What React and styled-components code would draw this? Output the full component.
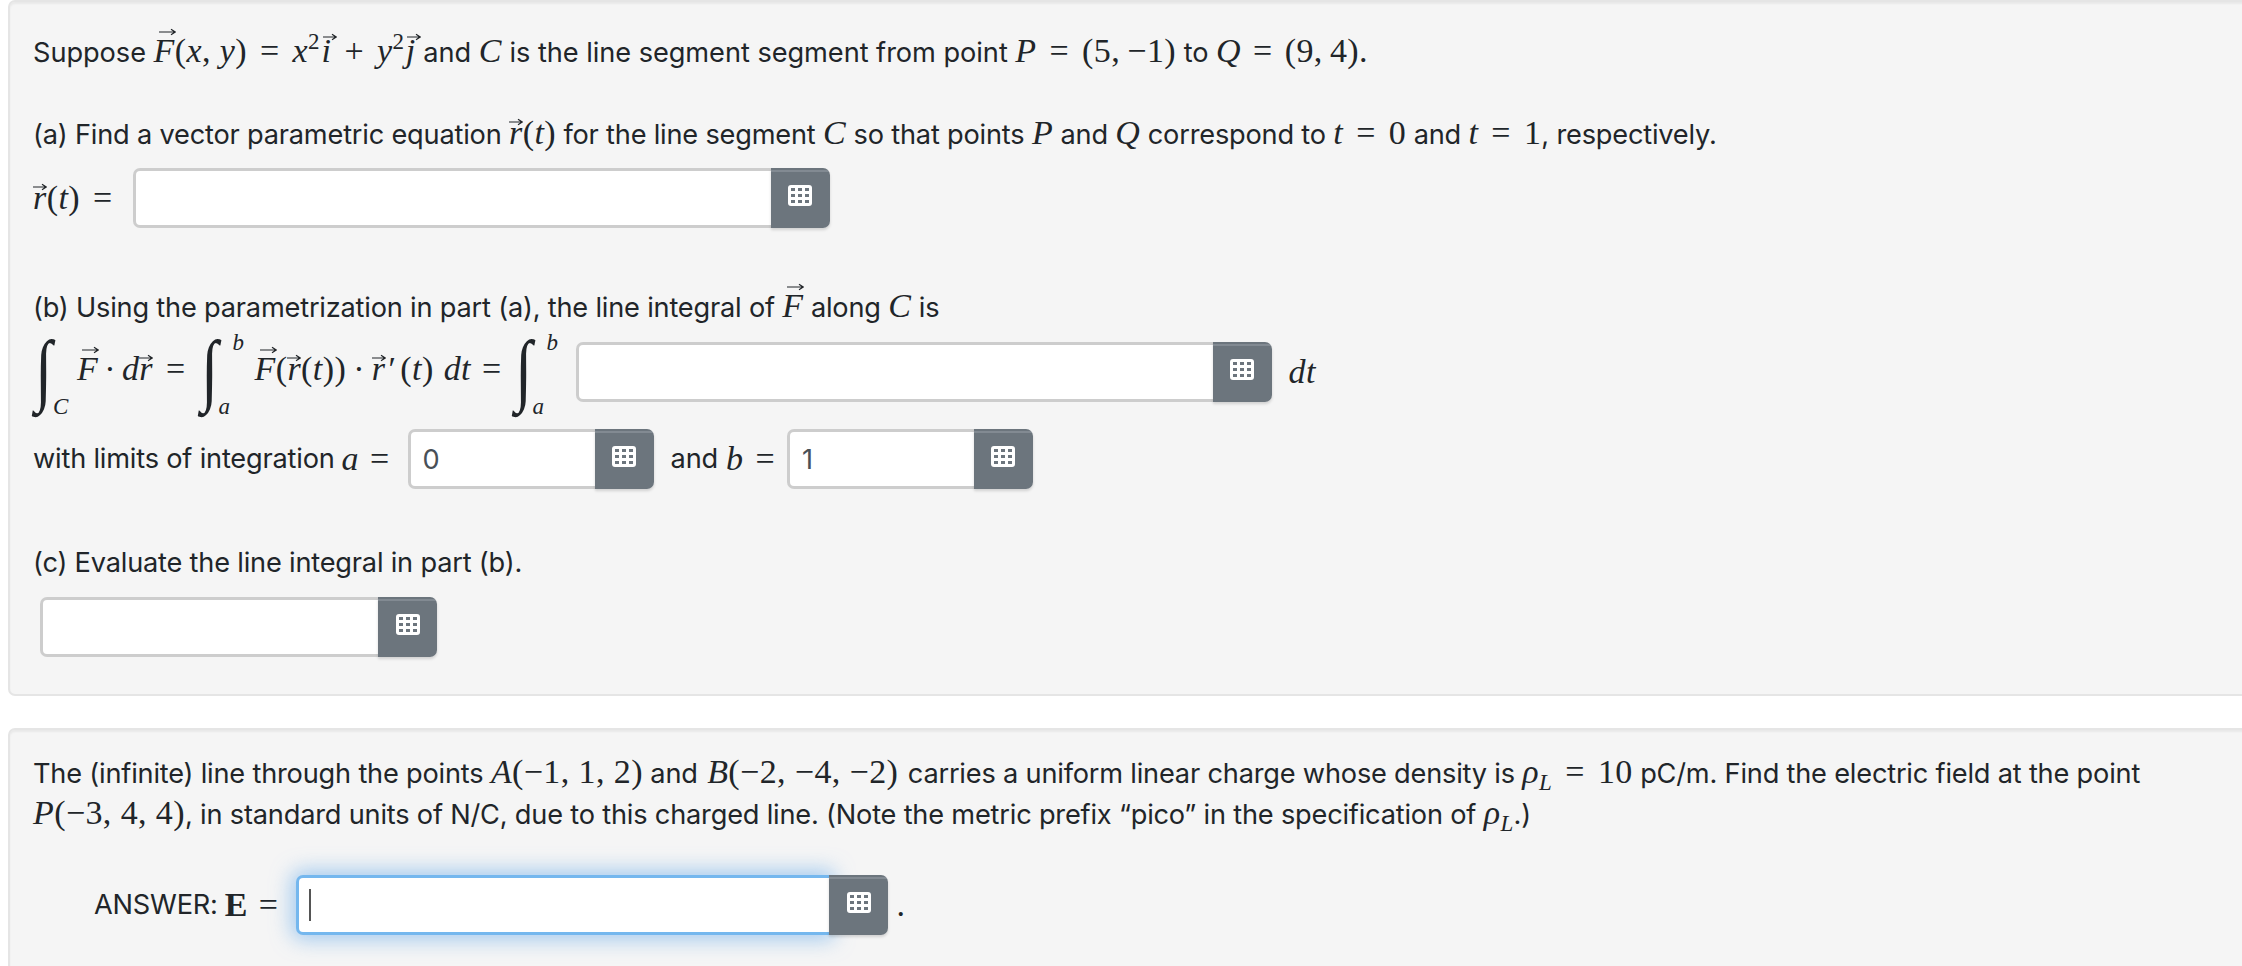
import React from "react";
import styled, { createGlobalStyle } from "styled-components";

const GlobalStyle = createGlobalStyle`
  html, body {
    margin: 0;
    height: 100%;
    overflow: hidden;
    background: #fff;
  }
  body {
    font-family: Inter, "Liberation Sans", sans-serif;
    font-size: 27.2px;
    line-height: 40.8px;
    color: #212529;
  }
`;

const Page = styled.div`
  height: 966px;
  overflow: hidden;
  padding-left: 8px;
  display: flex;
  flex-direction: column;
  gap: 32px;
  letter-spacing: -0.2px;
`;

const Panel = styled.section`
  flex: none;
  width: 2260px;
  box-sizing: border-box;
  height: ${(p) => p.$height}px;
  padding: ${(p) => p.$top}px 24px 0 23px;
  background: #f5f5f5;
  border: 2px solid #e5e5e5;
  border-radius: 7px;
  box-shadow: inset 0 2px 2px rgba(0, 0, 0, 0.05);
`;

const Line = styled.div`
  white-space: nowrap;
  height: 41px;
  margin-top: ${(p) => p.$mt || 0}px;
  letter-spacing: ${(p) => (p.$ls === undefined ? -0.2 : p.$ls)}px;
`;

const Row = styled.div`
  display: flex;
  align-items: center;
  height: ${(p) => p.$h || 60}px;
  margin-top: ${(p) => p.$mt || 0}px;
  margin-left: ${(p) => p.$ml || 0}px;
  white-space: nowrap;
`;

const Word = styled.span`
  margin-left: ${(p) => p.$ml || 0}px;
`;

const Math = styled.span`
  font-family: "Liberation Serif", serif;
  font-size: 34px;
  line-height: 1;
  letter-spacing: 0.4px;
  margin: 0 ${(p) => p.$gap || 0}px;
`;

const Mi = styled.i`
  font-style: italic;
  margin-left: ${(p) => p.$ml || 0}px;
  margin-right: ${(p) => p.$mr || 0}px;
`;

const Bold = styled.b`
  font-weight: 700;
`;

const Op = styled.span`
  margin: 0 ${(p) => (p.$gap === undefined ? 13 : p.$gap)}px;
`;

const Sup = styled.sup`
  font-size: 23px;
  line-height: 0;
  vertical-align: 13px;
  margin-right: 1.5px;
`;

const Sub = styled.sub`
  font-size: 23px;
  line-height: 0;
  vertical-align: -7px;
  font-style: italic;
`;

const Prime = styled.span`
  margin: 0 4px 0 3px;
`;

const VecBox = styled.span`
  position: relative;
  display: inline-block;
`;

const ArrowSvg = styled.svg`
  position: absolute;
  left: ${(p) => p.$left}px;
  top: ${(p) => p.$top}px;
`;

const IntegralBox = styled.span`
  position: relative;
  display: inline-block;
  vertical-align: middle;
  width: ${(p) => p.$w}px;
  height: 58px;
`;

const IntegralSign = styled.span`
  position: absolute;
  left: 2px;
  top: -20px;
  font-family: "Liberation Serif", serif;
  font-size: 80px;
  line-height: 92px;
  font-weight: 400;
  transform-origin: left center;
  transform: scaleX(0.78);
`;

const Limit = styled.i`
  position: absolute;
  left: ${(p) => p.$left}px;
  top: ${(p) => p.$top}px;
  font-family: "Liberation Serif", serif;
  font-size: 23px;
  line-height: 1;
`;

const Group = styled.span`
  position: relative;
  display: inline-flex;
  flex: none;
  height: 60px;
  margin: ${(p) => p.$margin || "0"};
`;

const Field = styled.input`
  box-sizing: border-box;
  width: ${(p) => p.$w}px;
  height: 60px;
  padding: 0 12px;
  background: #fff;
  color: #495057;
  border: 3px solid ${(p) => (p.$focused ? "#74b7ee" : "#cdcdcd")};
  border-right: none;
  border-radius: 7px 0 0 7px;
  font-family: Inter, "Liberation Sans", sans-serif;
  font-size: 27.2px;
  outline: none;
  box-shadow: ${(p) => (p.$focused ? "0 0 20px 5px rgba(100, 170, 235, 0.55)" : "none")};
`;

const CalcButton = styled.button`
  width: 59px;
  height: 60px;
  padding: 0 0 6px;
  display: flex;
  align-items: center;
  justify-content: center;
  border: none;
  border-radius: 0 7px 7px 0;
  background: linear-gradient(#6c757d 0 2px, #828a92 2px 4px, #6c757d 4px);
  box-shadow: 0 2px 3px rgba(0, 0, 0, 0.15);
  position: relative;
`;

const Caret = styled.span`
  position: absolute;
  left: 13px;
  top: 14px;
  width: 2px;
  height: 32px;
  background: #555;
`;

const CalcIcon = () => (
  <svg width="24" height="21" viewBox="0 0 24 21">
    <rect width="24" height="21" rx="3" fill="#fff" />
    {[3, 9, 15].map((y) =>
      [3, 10, 17].map((x) => (
        <rect key={`${x}-${y}`} x={x} y={y} width="4" height="3" fill="#6c757d" />
      ))
    )}
  </svg>
);

const Arrow = ({ left = 2, top = -3, width = 16 }) => (
  <ArrowSvg $left={left} $top={top} width={width} height="8" viewBox={`0 0 ${width} 8`}>
    <path
      d={`M0 4H${width - 1}M${width - 5} 1.2L${width - 0.8} 4L${width - 5} 6.8`}
      fill="none"
      stroke="#212529"
      strokeWidth="1.2"
    />
  </ArrowSvg>
);

const VecF = () => (
  <VecBox>
    <Mi>F</Mi>
    <Arrow left={5} top={-6} width={17} />
  </VecBox>
);

const VecR = () => (
  <VecBox>
    <Mi>r</Mi>
    <Arrow left={0} top={2} width={14} />
  </VecBox>
);

const VecIJ = ({ children }) => (
  <VecBox>
    <Mi>{children}</Mi>
    <Arrow left={1} top={-1} width={14} />
  </VecBox>
);

const Integral = ({ upper, lower, width, lowerLeft }) => (
  <IntegralBox $w={width}>
    <IntegralSign>∫</IntegralSign>
    {upper && (
      <Limit $left={34} $top={-12}>
        {upper}
      </Limit>
    )}
    <Limit $left={lowerLeft} $top={52}>
      {lower}
    </Limit>
  </IntegralBox>
);

const Answer = ({ width, value, focused, margin }) => (
  <Group $margin={margin}>
    <Field $w={width} $focused={focused} defaultValue={value} readOnly />
    {focused && <Caret />}
    <CalcButton type="button" aria-label="Open math editor">
      <CalcIcon />
    </CalcButton>
  </Group>
);

export default function App() {
  return (
    <>
      <GlobalStyle />
      <Page>
        <Panel $height={696} $top={31}>
          <Line $ls={-0.05}>
            Suppose{" "}
            <Math>
              <VecF />(<Mi>x</Mi>, <Mi>y</Mi>)<Op>=</Op>
              <Mi>x</Mi>
              <Sup>2</Sup>
              <VecIJ>i</VecIJ>
              <Op>+</Op>
              <Mi>y</Mi>
              <Sup>2</Sup>
              <VecIJ>j</VecIJ>
            </Math>{" "}
            and{" "}
            <Math>
              <Mi>C</Mi>
            </Math>{" "}
            is the line segment segment from point{" "}
            <Math>
              <Mi>P</Mi>
              <Op>=</Op>(5,{"\u2009"}−1)
            </Math>{" "}
            to{" "}
            <Math>
              <Mi>Q</Mi>
              <Op $gap={12}>=</Op>(9,{"\u2009"}4).
            </Math>
          </Line>
          <Line $mt={41}>
            (a) Find a vector parametric equation{" "}
            <Math>
              <VecR />(<Mi>t</Mi>)
            </Math>{" "}
            for the line segment{" "}
            <Math>
              <Mi>C</Mi>
            </Math>{" "}
            so that points{" "}
            <Math>
              <Mi>P</Mi>
            </Math>{" "}
            and{" "}
            <Math>
              <Mi>Q</Mi>
            </Math>{" "}
            correspond to{" "}
            <Math>
              <Mi>t</Mi>
              <Op>=</Op>0
            </Math>{" "}
            and{" "}
            <Math>
              <Mi>t</Mi>
              <Op>=</Op>1
            </Math>
            , respectively.
          </Line>
          <Row $mt={12}>
            <Math>
              <VecR />(<Mi>t</Mi>)<Op>=</Op>
            </Math>
            <Answer width={638} margin="0 0 0 7px" />
          </Row>
          <Line $mt={60}>
            (b) Using the parametrization in part (a), the line integral of{" "}
            <Math>
              <VecF />
            </Math>{" "}
            along{" "}
            <Math>
              <Mi>C</Mi>
            </Math>{" "}
            is
          </Line>
          <Row $mt={14} $h={58}>
            <Math>
              <Integral lower="C" width={44} lowerLeft={20} />
              <VecF />
              <Op $gap={6}>·</Op>
              <Mi>d</Mi>
              <VecR />
              <Op>=</Op>
              <Integral upper="b" lower="a" width={56} lowerLeft={20} />
              <VecF />(<VecR />(<Mi>t</Mi>))
              <Op $gap={7}>·</Op>
              <VecR />
              <Prime>′</Prime>(<Mi>t</Mi>)
              <Mi $ml={10}>dt</Mi>
              <Op $gap={11}>=</Op>
              <Integral upper="b" lower="a" width={63} lowerLeft={20} />
            </Math>
            <Answer width={637} margin="-2px 0 -2px 0" />
            <Math $gap={17}>
              <Mi>dt</Mi>
            </Math>
          </Row>
          <Row $mt={28}>
            with limits of integration{" "}
            <Math $gap={7}>
              <Mi>a</Mi>
              <Op $gap={11}>=</Op>
            </Math>
            <Answer width={187} value="0" />
            <Word $ml={17}>and</Word>
            <Math $gap={8}>
              <Mi>b</Mi>
              <Op $gap={12}>=</Op>
            </Math>
            <Answer width={187} value="1" margin="0 0 0 -8px" />
          </Row>
          <Line $mt={54}>(c) Evaluate the line integral in part (b).</Line>
          <Row $mt={13}>
            <Answer width={338} margin="0 0 0 7px" />
          </Row>
        </Panel>
        <Panel $height={260} $top={24}>
          <Line>
            The (infinite) line through the points{" "}
            <Math>
              <Mi>A</Mi>(−1, 1, 2)
            </Math>{" "}
            and{" "}
            <Math $gap={2}>
              <Mi>B</Mi>(−2, −4, −2)
            </Math>{" "}
            carries a uniform linear charge whose density is{" "}
            <Math>
              <Mi>ρ</Mi>
              <Sub>L</Sub>
              <Op>=</Op>10
            </Math>{" "}
            pC/m. Find the electric field at the point
          </Line>
          <Line>
            <Math>
              <Mi>P</Mi>(−3, 4, 4)
            </Math>
            , in standard units of N/C, due to this charged line. (Note the metric prefix “pico” in the
            specification of{" "}
            <Math>
              <Mi>ρ</Mi>
              <Sub>L</Sub>
            </Math>
            .)
          </Line>
          <Row $mt={39} $ml={61}>
            ANSWER:{" "}
            <Math $gap={7}>
              <Bold>E</Bold>
              <Op $gap={11}>=</Op>
            </Math>
            <Answer width={533} focused margin="0 8px 0 0" />
            <Math>.</Math>
          </Row>
        </Panel>
      </Page>
    </>
  );
}
